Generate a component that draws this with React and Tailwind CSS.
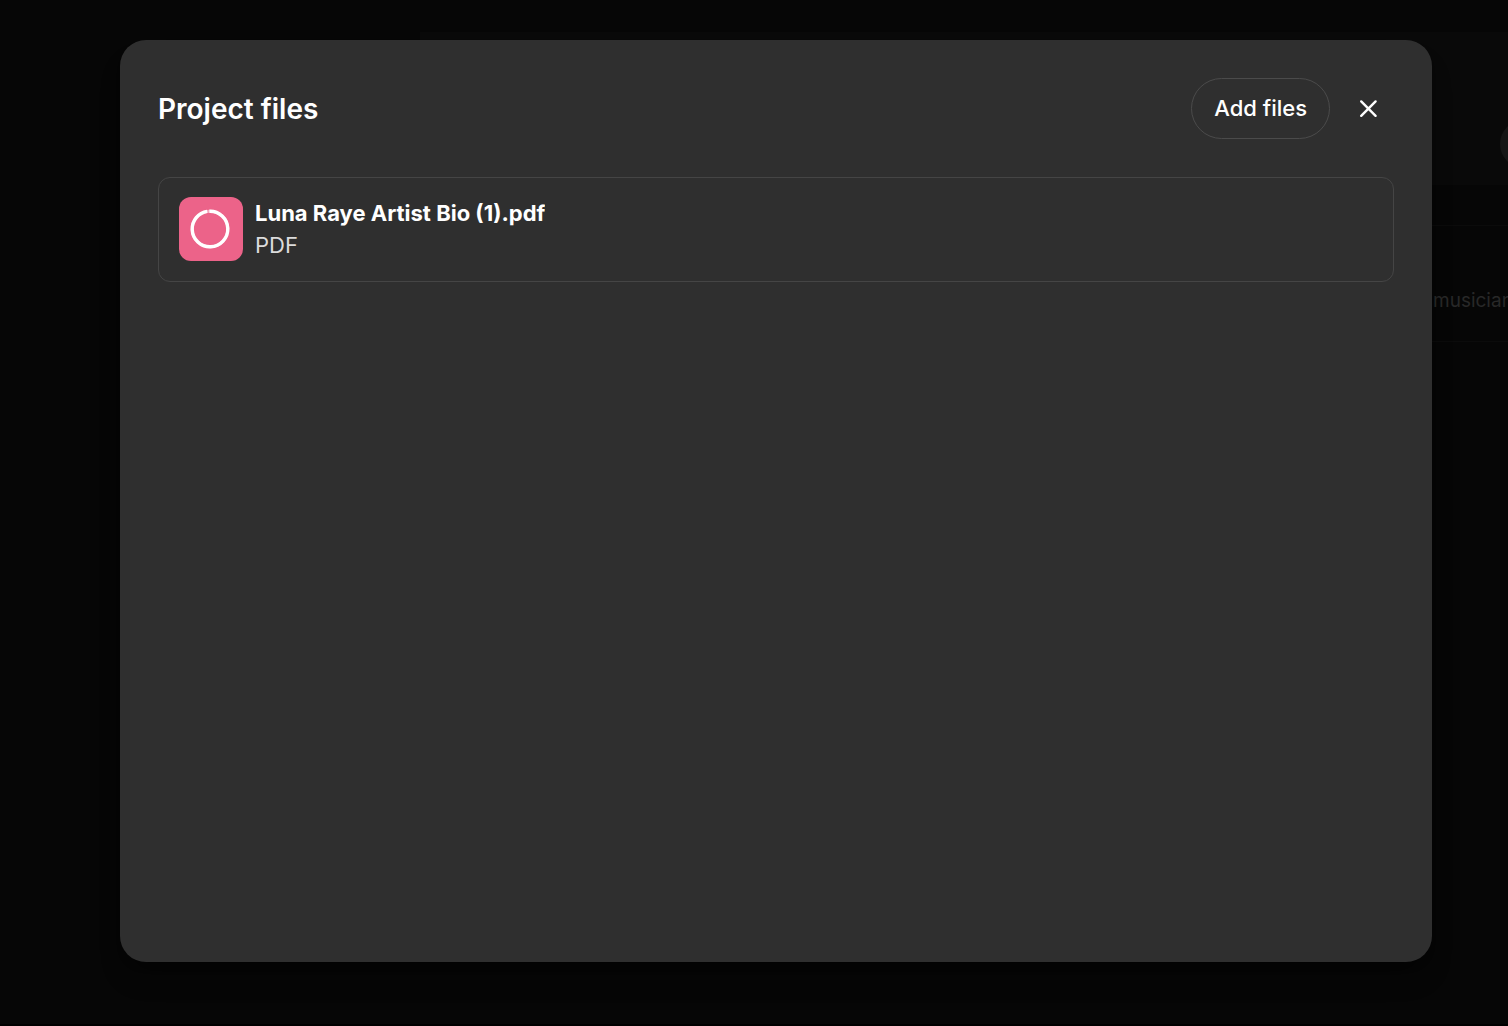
import React from 'react';

const files = [
  { id: 1, name: 'Luna Raye Artist Bio (1).pdf', type: 'PDF', progress: 98 },
];

function ProgressRing({ value }) {
  return (
    <svg viewBox="0 0 40 40" fill="none" className="w-10 h-10 mr-0.5" role="img" aria-label="Uploading">
      <circle cx="20" cy="20" r="17.8" stroke="#f4a5bf" strokeWidth="3" />
      <circle
        cx="20"
        cy="20"
        r="17.8"
        stroke="white"
        strokeWidth="3.4"
        pathLength="100"
        strokeDasharray={`${value} 100`}
        transform="rotate(-92 20 20)"
      />
    </svg>
  );
}

function FileRow({ file }) {
  return (
    <li className="flex items-center gap-3 px-5 pt-[18px] pb-5 h-[105px] rounded-xl border border-[#454545]">
      <div className="flex items-center justify-center shrink-0 w-16 h-16 rounded-xl bg-[#ec6389]">
        <ProgressRing value={file.progress} />
      </div>
      <div className="min-w-0 text-[22px] leading-8">
        <p className="font-bold text-white truncate">{file.name}</p>
        <p className="text-[#dcdcdc]">{file.type}</p>
      </div>
    </li>
  );
}

// Project page that sits dimmed under the dialog
function Backdrop() {
  return (
    <div className="absolute inset-0 overflow-hidden border-b-2 border-black pt-8" aria-hidden="true">
      <div className="ml-[420px] h-[153px] flex items-center justify-end bg-[#090909]">
        <div className="w-12 h-12 -mr-10 mt-[70px] rounded-full bg-[#151515]" />
      </div>
      <div className="ml-[420px] mt-10 h-[117px] flex items-center justify-end border-y border-[#0b0b0b]">
        <div className="w-[75px] mt-9 whitespace-nowrap text-[19px] text-[#282828]">musician</div>
      </div>
    </div>
  );
}

export default function App() {
  return (
    <div className="relative min-h-screen flex bg-[#060606] pt-10 pr-[76px] pb-16 pl-[120px] font-['Inter',sans-serif]">
      <Backdrop />

      <div
        role="dialog"
        aria-labelledby="files-title"
        className="relative flex-1 rounded-[26px] bg-[#2f2f2f] px-[38px] pt-[38px] shadow-xl shadow-black/30"
      >
        {/* Dialog Header */}
        <header className="flex items-center justify-between">
          <h2 id="files-title" className="text-[28px] leading-9 font-semibold text-white">
            Project files
          </h2>
          <div className="flex items-center gap-3">
            <button
              type="button"
              className="h-[61px] px-[22px] rounded-full border border-[#4b4b4b] text-[22px] font-medium text-white"
            >
              Add files
            </button>
            <button type="button" aria-label="Close" className="flex items-center justify-center w-[52px] h-[52px]">
              <svg viewBox="0 0 20 20" fill="none" className="w-5 h-5" stroke="white" strokeWidth="2.4" strokeLinecap="round">
                <path d="M3.2 2.4 17.6 16.8M17.6 2.4 3.2 16.8" />
              </svg>
            </button>
          </div>
        </header>

        {/* File List */}
        <ul className="mt-[38px]">
          {files.map(file => (
            <FileRow key={file.id} file={file} />
          ))}
        </ul>
      </div>
    </div>
  );
}
